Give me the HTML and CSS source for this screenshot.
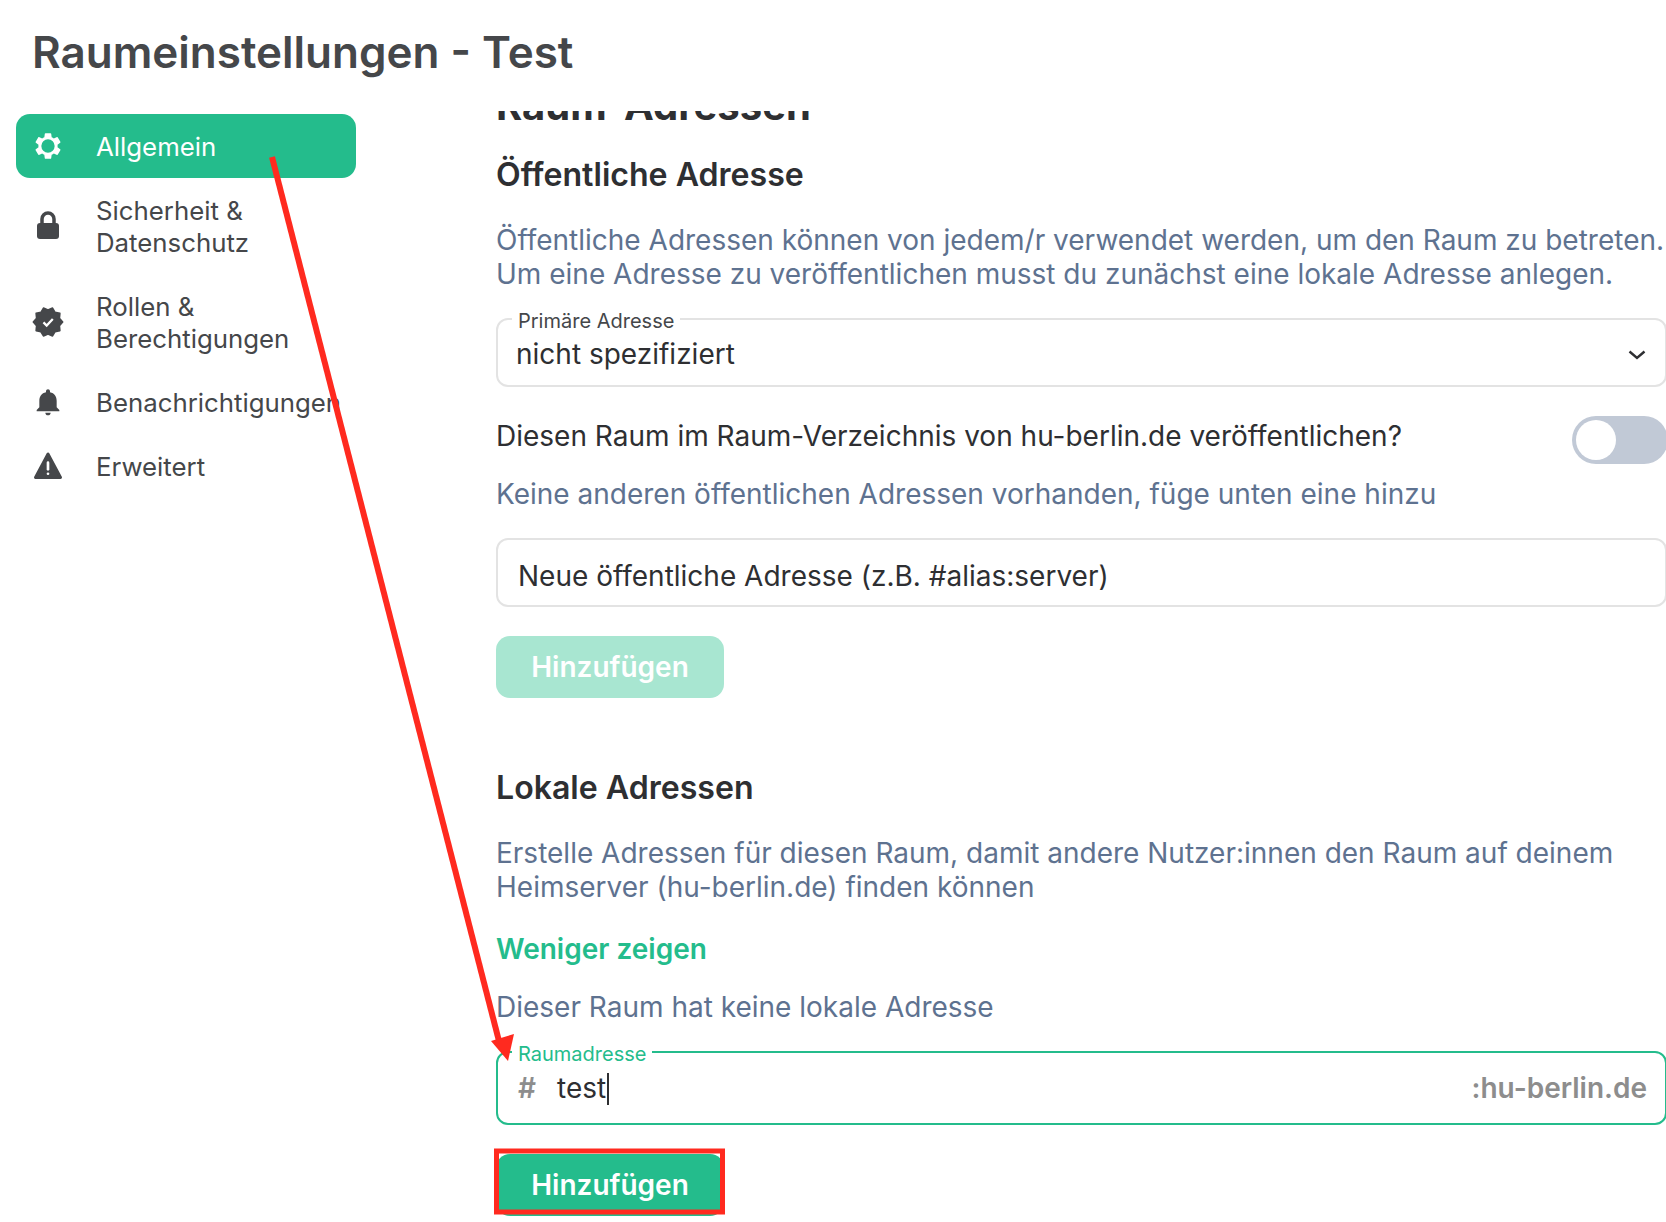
FILE: index.html
```html
<!DOCTYPE html>
<html lang="de">
<head>
    <meta charset="UTF-8">
    <title>Raumeinstellungen - Test</title>
    <link rel="stylesheet" href="styles.css">
</head>
<body>
    <header class="kopf">
        <h1>Raumeinstellungen - Test</h1>
    </header>

    <div class="layout">
        <nav class="menu">
            <a class="menu-item aktiv">
                <svg class="icon" viewBox="0 0 24 24"><path fill-rule="evenodd" d="M19.14 12.94c.04-.3.06-.61.06-.94 0-.32-.02-.64-.07-.94l2.03-1.58a.49.49 0 0 0 .12-.61l-1.92-3.32a.488.488 0 0 0-.59-.22l-2.39.96c-.5-.38-1.03-.7-1.62-.94l-.36-2.54a.484.484 0 0 0-.48-.41h-3.84c-.24 0-.43.17-.47.41l-.36 2.54c-.59.24-1.13.57-1.62.94l-2.39-.96c-.22-.08-.47 0-.59.22L2.74 8.87c-.12.21-.08.47.12.61l2.03 1.58c-.05.3-.09.63-.09.94s.02.64.07.94l-2.03 1.58a.49.49 0 0 0-.12.61l1.92 3.32c.12.22.37.29.59.22l2.39-.96c.5.38 1.03.7 1.62.94l.36 2.54c.05.24.24.41.48.41h3.84c.24 0 .44-.17.47-.41l.36-2.54c.59-.24 1.13-.56 1.62-.94l2.39.96c.22.08.47 0 .59-.22l1.92-3.32c.12-.22.07-.47-.12-.61l-2.01-1.58zM12 17a5 5 0 1 1 0-10 5 5 0 0 1 0 10z"/></svg>
                <span>Allgemein</span>
            </a>
            <a class="menu-item">
                <svg class="icon" viewBox="0 0 32 32"><rect x="5" y="13" width="22" height="16" rx="3"/><path class="bügel" d="M10 14V9a6 6 0 0 1 12 0v5"/></svg>
                <span>Sicherheit &amp; Datenschutz</span>
            </a>
            <a class="menu-item">
                <svg class="icon" viewBox="0 0 24 24"><path class="rund" d="M23 12l-2.44-2.78.34-3.68-3.61-.82-1.89-3.18L12 3 8.6 1.54 6.71 4.72l-3.61.81.34 3.68L1 12l2.44 2.78-.34 3.69 3.61.82 1.89 3.18L12 21l3.4 1.46 1.89-3.18 3.61-.82-.34-3.68L23 12z"/><path class="haken" d="M8.6 12.3l2.4 2.4 4.6-4.9"/></svg>
                <span>Rollen &amp; Berechtigungen</span>
            </a>
            <a class="menu-item">
                <svg class="icon" viewBox="0 0 24 24"><path d="M12 22c1.1 0 2-.9 2-2h-4c0 1.1.89 2 2 2zm6.500-6v-5c0-3.070-1.640-5.640-5-6.320V4c0-.83-.67-1.500-1.500-1.500s-1.500.67-1.500 1.500v.68C7.130 5.360 5.500 7.920 5.500 11v5l-2 2v1h17v-1l-2-2z"/></svg>
                <span>Benachrichtigungen</span>
            </a>
            <a class="menu-item">
                <svg class="icon" viewBox="0 0 24 24"><path class="dreieck" d="M2.600 20.600h18.800L12 3z"/><rect class="punkt" x="11" y="8.500" width="2" height="7" rx="1"/><rect class="punkt" x="11" y="16.800" width="2" height="2" rx="1"/></svg>
                <span>Erweitert</span>
            </a>
        </nav>

        <main class="inhalt">
            <h2 class="titel">Raum-Adressen</h2>

            <h3 class="untertitel">Öffentliche Adresse</h3>
            <p class="hinweis abstand-desc">Öffentliche Adressen können von jedem/r verwendet werden, um den Raum zu betreten.<br>Um eine Adresse zu veröffentlichen musst du zunächst eine lokale Adresse anlegen.</p>

            <div class="feld feld-select">
                <label class="feld-label">Primäre Adresse</label>
                <span class="wert">nicht spezifiziert</span>
                <svg class="pfeil" viewBox="0 0 18 10"><path d="M1.500 1.500L9 8l7.500-6.500"/></svg>
            </div>

            <div class="schalter-zeile">
                <span>Diesen Raum im Raum-Verzeichnis von hu-berlin.de veröffentlichen?</span>
                <div class="schalter"><div class="knopf"></div></div>
            </div>

            <p class="hinweis abstand-keine">Keine anderen öffentlichen Adressen vorhanden, füge unten eine hinzu</p>

            <div class="feld feld-neu">
                <span class="wert">Neue öffentliche Adresse (z.B. #alias:server)</span>
            </div>

            <button class="knopf-gruen deaktiviert">Hinzufügen</button>

            <h3 class="untertitel abstand-lokal">Lokale Adressen</h3>
            <p class="hinweis abstand-erstelle">Erstelle Adressen für diesen Raum, damit andere Nutzer:innen den Raum auf deinem<br>Heimserver (hu-berlin.de) finden können</p>

            <a class="link">Weniger zeigen</a>
            <p class="hinweis abstand-dieser">Dieser Raum hat keine lokale Adresse</p>

            <div class="feld feld-aktiv">
                <label class="feld-label">Raumadresse</label>
                <span class="prefix">#</span>
                <span class="wert eingabe">test</span>
                <span class="suffix">:hu-berlin.de</span>
            </div>

            <button class="knopf-gruen abstand-senden">Hinzufügen</button>
        </main>
    </div>

    <!-- rote Markierungen aus dem Screenshot -->
    <svg class="markierung" viewBox="0 0 1666 1222">
        <path class="rot-linie" d="M272 157L500 1045"/>
        <path class="rot-spitze" d="M508 1061L491 1041L514 1034z"/>
        <rect class="rot-rahmen" x="496.500" y="1151" width="226" height="61"/>
    </svg>
</body>
</html>
```

FILE: styles.css
```css
* {
    box-sizing: border-box;
}

html, body {
    margin: 0;
    height: 1222px;
    overflow: hidden;
}

body {
    position: relative;
    font-family: Inter, "Noto Sans", sans-serif;
    font-size: 28px;
    background-color: #ffffff;
    color: #2e2f32;
}

.kopf {
    height: 111px;
    padding-left: 32px;
}

.kopf h1 {
    margin: 0;
    font-size: 44px;
    font-weight: 600;
    line-height: 104px;
    color: #45474a;
}

.layout {
    display: flex;
    height: 1111px;
}

.menu {
    flex-shrink: 0;
    width: 340px;
    margin: 3px 140px 0 16px;
    font-size: 25.800px;
    color: #45474a;
}

.menu-item {
    display: flex;
    align-items: center;
    gap: 32px;
    padding: 16px 16px 15px;
    border-radius: 14px;
    line-height: 32px;
}

.menu-item span {
    padding-top: 1px;
}

.menu-item.aktiv {
    background-color: #24bc8c;
    color: #ffffff;
}

.icon {
    flex-shrink: 0;
    width: 32px;
    height: 32px;
    margin-bottom: 1px;
    fill: currentColor;
}

.icon .bügel {
    fill: none;
    stroke: currentColor;
    stroke-width: 3.500;
}

.icon .rund {
    stroke: currentColor;
    stroke-width: 1.200;
    stroke-linejoin: round;
}

.icon .dreieck {
    stroke: currentColor;
    stroke-width: 2.200;
    stroke-linejoin: round;
}

.icon .haken {
    fill: none;
    stroke: #ffffff;
    stroke-width: 1.700;
}

.icon .punkt {
    fill: #ffffff;
}

.inhalt {
    width: 1171px;
    overflow: hidden;
    flex-shrink: 0;
}

.titel {
    margin: -26px 0 0;
    font-size: 40px;
    font-weight: 700;
    line-height: 42px;
}

.untertitel {
    margin: 29px 0 0;
    font-size: 32.100px;
    font-weight: 600;
    line-height: 38px;
}

.hinweis {
    margin: 0;
    line-height: 34px;
    color: #5e7290;
}

.abstand-desc {
    margin-top: 29px;
    white-space: nowrap;
}

.abstand-keine {
    margin-top: 13px;
}

.abstand-lokal {
    margin-top: 71px;
}

.abstand-erstelle {
    margin-top: 29px;
}

.abstand-dieser {
    margin-top: 24px;
}

.feld {
    position: relative;
    display: flex;
    align-items: center;
    height: 69px;
    margin-top: 27px;
    border: 2px solid #e3e3e3;
    border-radius: 12px;
    padding: 0 20px;
}

.feld-label {
    position: absolute;
    top: -11px;
    left: 14px;
    padding: 0 6px;
    background-color: #ffffff;
    font-size: 20px;
    line-height: 24px;
    color: #45474a;
}

.feld-select {
    padding: 2px 19px 0 18px;
}

.feld-select .wert {
    flex-grow: 1;
}

.pfeil {
    width: 18px;
    height: 10px;
    margin-top: 2px;
    fill: none;
    stroke: #2e2f32;
    stroke-width: 2.400;
}

.feld-neu {
    padding-top: 6px;
}

.schalter-zeile {
    display: flex;
    justify-content: space-between;
    align-items: flex-start;
    margin-top: 29px;
    height: 48px;
    line-height: 40px;
}

.schalter {
    flex-shrink: 0;
    width: 96px;
    height: 48px;
    margin-right: -1px;
    padding: 4px;
    border-radius: 24px;
    background-color: #c1c9d6;
}

.knopf {
    width: 40px;
    height: 40px;
    border-radius: 50%;
    background-color: #ffffff;
}

.knopf-gruen {
    display: block;
    width: 228px;
    height: 62px;
    margin-top: 29px;
    border: none;
    border-radius: 14px;
    background-color: #24bc8c;
    color: #ffffff;
    font-family: inherit;
    font-size: 28px;
    font-weight: 600;
}

.knopf-gruen.deaktiviert {
    background-color: #a8e6d1;
}

.link {
    display: block;
    margin-top: 28px;
    line-height: 34px;
    font-weight: 600;
    color: #24bc8c;
}

.feld-aktiv {
    height: 74px;
    margin-top: 27px;
    border-color: #24bc8c;
    padding: 0 18px 0 20px;
}

.feld-aktiv .feld-label {
    color: #24bc8c;
}

.prefix {
    width: 39px;
    font-weight: 600;
    color: #8d8d8d;
}

.eingabe {
    flex-grow: 1;
}

.eingabe::after {
    content: "";
    display: inline-block;
    width: 2px;
    height: 32px;
    margin-left: 1px;
    background-color: #2e2f32;
    vertical-align: -7px;
}

.suffix {
    font-weight: 600;
    color: #8d8d8d;
}

.abstand-senden {
    margin-top: 29px;
}

.markierung {
    position: absolute;
    top: 0;
    left: 0;
    width: 1666px;
    height: 1222px;
    pointer-events: none;
}

.rot-linie {
    fill: none;
    stroke: #ff2a1f;
    stroke-width: 6;
}

.rot-spitze {
    fill: #ff2a1f;
}

.rot-rahmen {
    fill: none;
    stroke: #ff2a1f;
    stroke-width: 5;
}
```
